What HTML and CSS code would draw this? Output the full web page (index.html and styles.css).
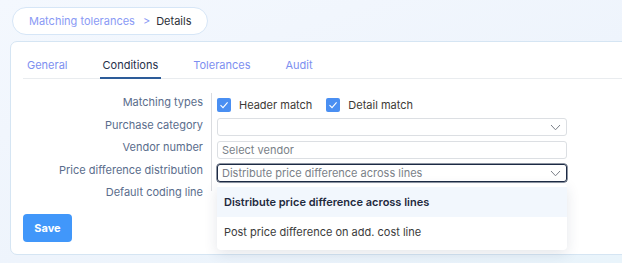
FILE: index.html
```html
<!DOCTYPE html>
<html lang="en">

<head>
    <meta charset="UTF-8">
    <meta name="viewport" content="width=device-width, initial-scale=1.0">
    <title>Matching tolerances - Details</title>
    <link rel="stylesheet" href="styles.css">
</head>

<body>
    <nav class="breadcrumb">
        <a class="crumbLink" href="#">Matching tolerances</a>
        <span class="crumbSep">&gt;</span>
        <span class="crumbCurrent">Details</span>
    </nav>

    <section class="card">
        <div class="tabs">
            <span class="tab">General</span>
            <span class="tab active">Conditions</span>
            <span class="tab">Tolerances</span>
            <span class="tab">Audit</span>
        </div>

        <div class="formBody">
            <div class="labels">
                <div class="label">Matching types</div>
                <div class="label">Purchase category</div>
                <div class="label">Vendor number</div>
                <div class="label">Price difference distribution</div>
                <div class="label">Default coding line</div>
            </div>
            <div class="fields">
                <div class="checkRow">
                    <label class="check">
                        <span class="box">
                            <svg width="10" height="10" viewBox="0 0 10 10"><path d="M1.5 5.2 L4 7.6 L8.6 2.4" fill="none" stroke="#fff" stroke-width="1.1"/></svg>
                        </span>
                        Header match
                    </label>
                    <label class="check">
                        <span class="box">
                            <svg width="10" height="10" viewBox="0 0 10 10"><path d="M1.5 5.2 L4 7.6 L8.6 2.4" fill="none" stroke="#fff" stroke-width="1.1"/></svg>
                        </span>
                        Detail match
                    </label>
                </div>
                <div class="control select">
                    <span class="value"></span>
                    <svg class="chevron" width="11" height="7" viewBox="0 0 11 7"><path d="M1 1 L5.5 5.8 L10 1" fill="none" stroke="#7a7f88" stroke-width="1"/></svg>
                </div>
                <div class="control">
                    <span class="placeholder">Select vendor</span>
                </div>
                <div class="control select focused">
                    <span class="placeholder">Distribute price difference across lines</span>
                    <svg class="chevron" width="11" height="7" viewBox="0 0 11 7"><path d="M1 1 L5.5 5.8 L10 1" fill="none" stroke="#7a7f88" stroke-width="1"/></svg>
                </div>
                <div class="menu">
                    <div class="option selected">Distribute price difference across lines</div>
                    <div class="option">Post price difference on add. cost line</div>
                </div>
            </div>
        </div>

        <button class="saveButton">Save</button>
    </section>
</body>

</html>
```

FILE: styles.css
```css
body {
    font-family: Inter, "Noto Sans", sans-serif;
    font-size: 11px;
    margin: 0;
    padding: 7px 0 0 12px;
    width: 622px;
    height: 263px;
    box-sizing: border-box;
    overflow: hidden;
    background: linear-gradient(160deg, #f4f8fe 0%, #eef4fc 55%, #e9f4fb 100%);
}

.breadcrumb {
    display: inline-flex;
    align-items: center;
    height: 26px;
    padding: 0 15px 0 16px;
    border: 1px solid #d6e6f7;
    border-radius: 14px;
    background-color: #fff;
    font-size: 11px;
}

.crumbLink {
    color: #8a9af5;
    text-decoration: none;
}

.crumbSep {
    color: #8a9af5;
    margin: 0 6px 0 8px;
}

.crumbCurrent {
    color: #2b2f38;
}

.card {
    position: relative;
    margin: 6px 0 0 -2px;
    width: 640px;
    height: 214px;
    box-sizing: border-box;
    background-color: #fff;
    border: 1px solid #d5e5f3;
    border-radius: 7px;
    padding: 0 0 0 12px;
}

.tabs {
    display: flex;
    height: 36px;
    align-items: flex-end;
    border-bottom: 1px solid #e9ecef;
    padding-left: 1px;
}

.tab {
    color: #7d8ff0;
    padding: 0 3px 5px;
    margin-right: 29px;
    border-bottom: 2px solid transparent;
    margin-bottom: -1px;
    line-height: 14px;
}

.tab.active {
    color: #26304a;
    border-bottom-color: #2d5c99;
}

.formBody {
    display: flex;
    margin-top: 14px;
}

.labels {
    width: 180px;
    padding-right: 8px;
    border-right: 1px solid #dadce0;
    text-align: right;
    color: #5a6d8c;
    height: 98px;
}

.label {
    height: 22.6px;
    line-height: 18px;
}

.fields {
    position: relative;
    width: 350px;
    padding-left: 5px;
}

.checkRow {
    display: flex;
    gap: 14px;
    height: 26px;
    align-items: center;
    margin-top: -1px;
}

.check {
    display: flex;
    align-items: center;
    color: #3d3a36;
    gap: 8px;
}

.box {
    width: 14px;
    height: 14px;
    border-radius: 2px;
    background-color: #4a8ff2;
    display: flex;
    align-items: center;
    justify-content: center;
}

.control {
    display: flex;
    align-items: center;
    justify-content: space-between;
    height: 16px;
    border: 1px solid #dcdfe3;
    border-radius: 3px;
    padding: 0 5px 0 4px;
    margin-bottom: 5px;
    box-sizing: content-box;
}

.placeholder {
    color: #7a7f88;
}

.control.focused {
    border-color: #1c2a44;
    box-shadow: 0 0 0 0.5px #1c2a44;
}

.menu {
    position: absolute;
    left: 5px;
    right: 0;
    top: 91px;
    background-color: #fff;
    border-radius: 4px;
    padding: 3px 0 3px;
    box-shadow: 0 4px 14px rgba(30, 50, 80, 0.12);
    z-index: 10;
}

.option {
    height: 30px;
    line-height: 30px;
    padding-left: 7px;
    color: #3b3b3b;
}

.option.selected {
    background-color: #f2f7fd;
    color: #1f2a3d;
    font-weight: 600;
}

.saveButton {
    position: absolute;
    left: 12px;
    top: 172px;
    width: 49px;
    height: 28px;
    border: none;
    border-radius: 4px;
    background-color: #4197fa;
    color: #fff;
    font-family: Inter, sans-serif;
    font-size: 11px;
    font-weight: 700;
}
```
